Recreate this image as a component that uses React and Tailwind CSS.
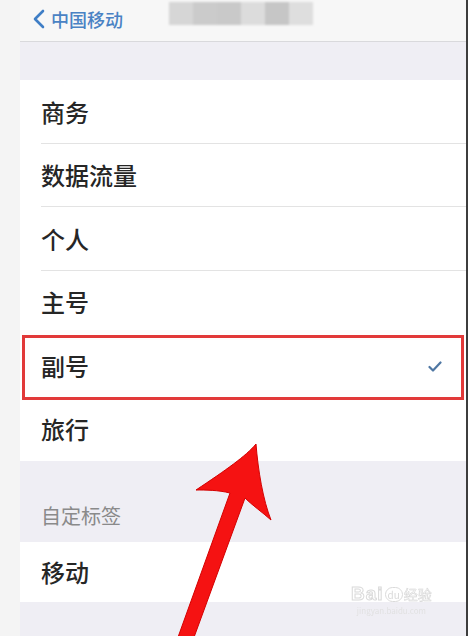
import React from "react";

const rows = ["商务", "数据流量", "个人", "主号", "副号", "旅行"];

const App = () => {
  return (
    <div
      className="relative flex h-[636px] w-[468px] overflow-hidden bg-[#f3f3f3]"
      style={{ fontFamily: '"Noto Sans CJK SC", "Noto Sans", sans-serif' }}
    >
      {/* left margin strip */}
      <div className="w-[20px] shrink-0 bg-[#f4f4f4]" />

      {/* screen */}
      <div className="flex flex-1 flex-col bg-[#efeef4]">
        {/* nav bar */}
        <div className="flex h-[42px] shrink-0 items-start border-b border-[#d9d9dc] bg-[#f7f7f7]">
          <div className="ml-[12px] mt-[9px] flex items-center">
            <svg width="14" height="20" viewBox="0 0 14 20">
              <path d="M11 2 L3 10 L11 18" fill="none" stroke="#3f7ec6" strokeWidth="2.6" strokeLinecap="round" strokeLinejoin="round" />
            </svg>
            <span className="ml-[5px] text-[18px] font-medium leading-[20px] text-[#4a82c4]">中国移动</span>
          </div>
          <div className="ml-[46px] mt-[2px] flex h-[23px] blur-[1px]">
            <div className="w-[24px] bg-[#d6d6d6]" />
            <div className="w-[24px] bg-[#cbcbcb]" />
            <div className="w-[24px] bg-[#c9c9c9]" />
            <div className="w-[24px] bg-[#dcdcdc]" />
            <div className="w-[24px] bg-[#c6c6c6]" />
            <div className="w-[24px] bg-[#dedede]" />
          </div>
        </div>

        {/* gap */}
        <div className="h-[38px] shrink-0" />

        {/* list */}
        <div className="shrink-0 bg-white">
          {rows.map((r, i) => (
            <div key={r} className="relative h-[63.5px]">
              <div className="flex h-full items-center pl-[21px] text-[24px] font-medium text-[#262626]">{r}</div>
              {r === "副号" && (
                <>
                  <svg className="absolute right-[24px] top-[27px]" width="14" height="11" viewBox="0 0 14 11">
                    <path d="M1.5 6 L5 9.5 L12.5 1.5" fill="none" stroke="#4f77a3" strokeWidth="2.2" strokeLinecap="round" strokeLinejoin="round" />
                  </svg>
                  <div className="absolute left-[2px] top-[1px] h-[65px] w-[442px] border-[3px] border-[#e23a3a]" />
                </>
              )}
              {i < rows.length - 1 && r !== "主号" && r !== "副号" && (
                <div className="absolute bottom-0 left-[21px] right-0 h-px bg-[#e3e3e3]" />
              )}
            </div>
          ))}
        </div>

        {/* custom label header */}
        <div className="flex h-[81px] shrink-0 items-end pb-[11px] pl-[21px] text-[20px] text-[#8a8a8a]">自定标签</div>

        {/* custom row */}
        <div className="flex h-[60px] shrink-0 items-center bg-white pl-[21px] text-[24px] font-medium text-[#262626]">移动</div>

        <div className="flex-1" />
      </div>

      {/* right edge */}
      <div className="w-[2px] shrink-0 bg-[#3d3d3d]" />

      {/* watermark */}
      <div className="absolute left-[351px] top-[584px] flex flex-col items-center gap-[2px] text-white opacity-90">
        <div className="flex h-[20px] items-center">
          <span className="text-[19px] font-bold leading-[20px] tracking-[1px]" style={{ fontFamily: '"Liberation Sans", sans-serif', WebkitTextStroke: "1px #d6d6d6" }}>
            Bai
          </span>
          <span className="mx-[1px] rounded-full border border-[#d6d6d6] px-[2px] text-[10px] leading-[13px] text-[#d6d6d6]">du</span>
          <span className="text-[14px] leading-[16px]" style={{ WebkitTextStroke: "0.5px #cfcfcf" }}>经验</span>
        </div>
        <span className="text-[8px] leading-[10px] text-[#e0e0e0]">jingyan.baidu.com</span>
      </div>

      {/* red arrow */}
      <svg className="absolute left-0 top-0" width="468" height="636" viewBox="0 0 468 636">
        <path
          d="M256 444 C246 456 226 470 196 490 C206 490 218 490 230 493 L177 640 L193 640 L245 498 C252 505 262 512 271 520 C263 500 258 470 256 444 Z"
          fill="#f51212"
          stroke="#d40000"
          strokeWidth="1"
          strokeLinejoin="round"
        />
      </svg>
    </div>
  );
};

export default App;
